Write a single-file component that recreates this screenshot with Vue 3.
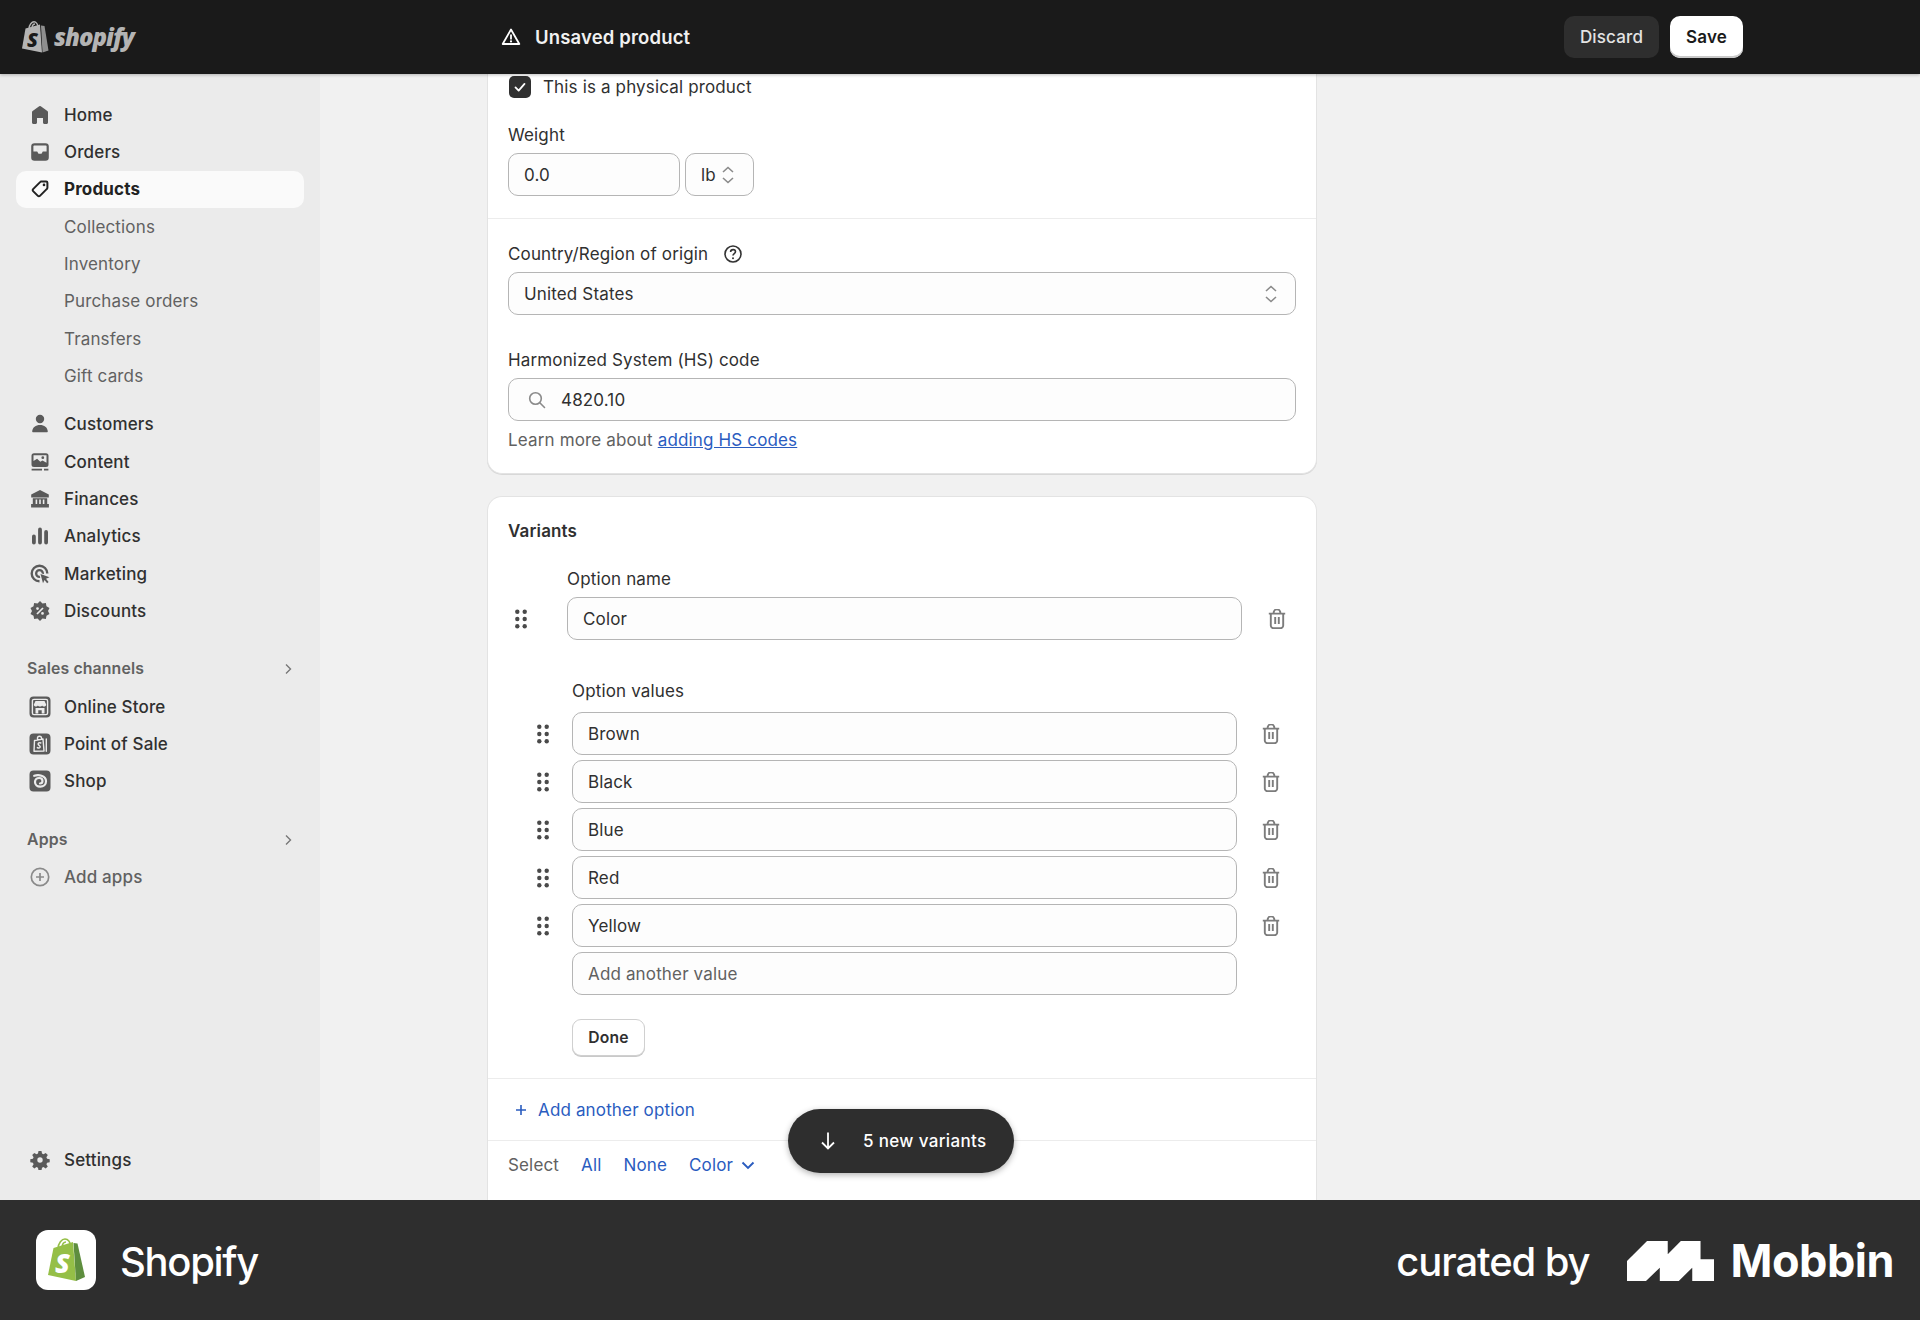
<script setup>
const D = '#5a5a5a'
const BG = '#ebebeb'
const badge = (() => {
  let p = ''
  const n = 10
  for (let i = 0; i < n * 2; i++) {
    const r = i % 2 ? 8 : 10
    const a = (Math.PI * i) / n
    p += (i ? 'L' : 'M') + (10 + r * Math.sin(a)).toFixed(2) + ' ' + (10 - r * Math.cos(a)).toFixed(2)
  }
  return p + 'Z'
})()

const icons = {
  home: [{ d: 'M18 7.26V17.5c0 .84-.67 1.500-1.500 1.500h-2c-.83 0-1.500-.66-1.500-1.500V13H7v4.48C7 18.32 6.33 19 5.500 19h-2c-.83 0-1.500-.68-1.500-1.52V7.26a1.500 1.500 0 0 1 .62-1.21l6.59-4.82a1.48 1.48 0 0 1 1.58 0l6.59 4.82A1.500 1.500 0 0 1 18 7.26z', c: D }],
  orders: [{ d: 'M4.500 1.200h11a3.300 3.300 0 0 1 3.300 3.300v11a3.300 3.300 0 0 1-3.300 3.300h-11a3.300 3.300 0 0 1-3.300-3.300v-11a3.300 3.300 0 0 1 3.300-3.300zM4.200 3.400a.8.8 0 0 0-.8.8v5.300h3.800l1.300 2.200h3l1.300-2.200h3.800V4.200a.8.8 0 0 0-.8-.8z', c: D }],
  products: [
    { s: 2, c: '#222', d: 'M11.200 2.600h5a1.200 1.200 0 0 1 1.200 1.200v5a1.600 1.600 0 0 1-.5 1.100l-7 7a1.400 1.400 0 0 1-2 0l-4.800-4.800a1.400 1.400 0 0 1 0-2l7-7a1.600 1.600 0 0 1 1.100-.5z' },
    { d: 'M14 4.600a1.300 1.300 0 1 1 0 2.600 1.300 1.300 0 0 1 0-2.600z', c: '#222' }
  ],
  customers: [{ d: 'M10 .8a4.200 4.200 0 1 1 0 8.400 4.200 4.200 0 0 1 0-8.400zM2.200 17.300c.3-4 3.500-6.300 7.800-6.300s7.500 2.300 7.800 6.300c0 .6-.4 1-1 1H3.200c-.6 0-1-.4-1-1z', c: D }],
  content: [
    { d: 'M4 1.200h12a2.500 2.500 0 0 1 2.500 2.500v8.800a2.500 2.500 0 0 1-2.500 2.500H4a2.500 2.500 0 0 1-2.500-2.500V3.700A2.500 2.500 0 0 1 4 1.200zM3.500 3.200v5.700l3.600-2.200 3.200 3 2.200-1.300 4 2.300V3.200z', c: D },
    { d: 'M12.800 4.300a1.400 1.400 0 1 1 0 2.800 1.400 1.400 0 0 1 0-2.800z', c: D },
    { d: 'M1.600 16.800h10.400v1.800H1.600zM14 16.800h4.400v1.800H14z', c: D }
  ],
  finances: [{ d: 'M10 1l8.800 4.500v3H1.200v-3zM2.800 9.300h14.400v5.700h1.700v3.500H1.100V15h1.700zM5.600 10.500v4.500h1.600v-4.500zM9.200 10.500v4.500h1.600v-4.500zM12.800 10.500v4.500h1.600v-4.500z', c: D }],
  analytics: [{ d: 'M2 10.400a1.900 1.900 0 0 1 3.800 0v6.200a1.900 1.900 0 0 1-3.800 0zM8.100 3.400a1.900 1.900 0 0 1 3.800 0v13.200a1.900 1.900 0 0 1-3.800 0zM14.200 5.900a1.900 1.900 0 0 1 3.800 0v10.700a1.900 1.900 0 0 1-3.800 0z', c: D }],
  marketing: [
    { d: 'M9.500 .5a9 9 0 0 1 9 9h-2.400a6.600 6.600 0 1 0-6.600 6.600v2.400a9 9 0 0 1 0-18zM9.500 5a4.500 4.500 0 1 1 0 9 4.500 4.500 0 0 1 0-9zM9.500 7.300a2.200 2.200 0 1 0 0 4.400 2.200 2.200 0 0 0 0-4.400z', c: D },
    { d: 'M9 8.500l11.500 4v3l-2.500 1 1 3.500h-3.500l-2-2.500-2 2z', c: BG },
    { d: 'M10.500 10l9 3.300-3.500 1.400 2.600 3.400-1.500 1.200-2.600-3.400-1.500 3.300z', c: D }
  ],
  discounts: [
    { d: badge, c: D },
    { d: 'M12.400 6.400l1.200 1.200-6 6-1.200-1.200z', c: BG },
    { d: 'M7.500 6.200a1.400 1.400 0 1 1 0 2.800 1.400 1.400 0 0 1 0-2.800zM12.500 11a1.400 1.400 0 1 1 0 2.800 1.400 1.400 0 0 1 0-2.800z', c: BG }
  ],
  store: [
    { d: 'M3.500 -.5h13a4 4 0 0 1 4 4v13a4 4 0 0 1-4 4h-13a4 4 0 0 1-4-4v-13a4 4 0 0 1 4-4z', c: D },
    { s: 1.400, c: BG, d: 'M4 2.400h12a1.600 1.600 0 0 1 1.600 1.600v12a1.600 1.600 0 0 1-1.600 1.600H4A1.600 1.600 0 0 1 2.400 16V4A1.600 1.600 0 0 1 4 2.400z' },
    { d: 'M5.500 4h9l1.700 3.500c0 1.500-1.200 2-2.100 2s-1.600-.5-2-1.100c-.4.6-1.100 1.100-2.100 1.100s-1.700-.5-2.100-1.100c-.4.6-1.100 1.100-2 1.100s-2.100-.5-2.100-2zM5.500 11h9v5.500h-2.800v-3.300H8.300v3.300H5.500z', c: BG }
  ],
  pos: [
    { d: 'M3.500 -.5h13a4 4 0 0 1 4 4v13a4 4 0 0 1-4 4h-13a4 4 0 0 1-4-4v-13a4 4 0 0 1 4-4z', c: D },
    { s: 1.400, c: BG, d: 'M4.500 6.500l8.500-1.500 1 12-10 .3zM7.500 6V4.200a2 2 0 0 1 4 0V5.300M16.300 5v12.300' },
    { s: 1.500, c: BG, d: 'M10.800 9c-1.500-.8-3 0-2.600 1.300.3 1 2.200 1.200 2 2.700-.2 1.200-1.800 1.300-2.800.6' }
  ],
  shop: [
    { d: 'M3.500 -.5h13a4 4 0 0 1 4 4v13a4 4 0 0 1-4 4h-13a4 4 0 0 1-4-4v-13a4 4 0 0 1 4-4z', c: D },
    { s: 2.200, c: BG, d: 'M4.200 4.800C8 3.500 16 4 16 10.200c0 3.400-2.500 5.500-5.800 5.500-2.800 0-5.200-1.900-5.200-4.700 0-2.300 1.800-4 4.200-4 2 0 3.300 1.400 3.300 3 0 1.500-1.200 2.500-2.500 2.500' }
  ],
  add: [
    { s: 1.700, c: '#8a8a8a', d: 'M10 1.300a8.700 8.700 0 1 1 0 17.400 8.700 8.700 0 0 1 0-17.400zM10 6v8M6 10h8' }
  ],
  settings: [
    { d: 'M8.500 1h3l.5 2.600 1.500.7 2.200-1.400 2.100 2.100-1.400 2.200.7 1.500 2.600.5v3l-2.600.5-.7 1.500 1.400 2.200-2.100 2.100-2.200-1.400-1.500.7-.5 2.600h-3l-.5-2.600-1.500-.7-2.200 1.400-2.100-2.100 1.400-2.200-.7-1.500-2.600-.5v-3l2.600-.5.7-1.500-1.400-2.200 2.100-2.100 2.200 1.400 1.500-.7zM10 7.300a2.700 2.700 0 1 0 0 5.400 2.700 2.700 0 0 0 0-5.400z', c: D }
  ]
}

const groupA = [
  { t: 'Home', i: 'home' },
  { t: 'Orders', i: 'orders' },
  { t: 'Products', i: 'products', active: true },
  { t: 'Collections', sub: true },
  { t: 'Inventory', sub: true },
  { t: 'Purchase orders', sub: true },
  { t: 'Transfers', sub: true },
  { t: 'Gift cards', sub: true }
]
const groupB = [
  { t: 'Customers', i: 'customers' },
  { t: 'Content', i: 'content' },
  { t: 'Finances', i: 'finances' },
  { t: 'Analytics', i: 'analytics' },
  { t: 'Marketing', i: 'marketing' },
  { t: 'Discounts', i: 'discounts' }
]
const groupC = [
  { t: 'Online Store', i: 'store' },
  { t: 'Point of Sale', i: 'pos' },
  { t: 'Shop', i: 'shop' }
]
const values = ['Brown', 'Black', 'Blue', 'Red', 'Yellow']
const groups = [groupA, groupB]
const drag = [[6.300, 2.800], [13.700, 2.800], [6.300, 10], [13.700, 10], [6.300, 17.200], [13.700, 17.200]]
const trashD = 'M1.800 4.600h16.400M6.600 4.600V3.800a3.400 3.400 0 0 1 6.800 0v.8M3.800 4.600v12a2.600 2.600 0 0 0 2.600 2.600h7.200a2.600 2.600 0 0 0 2.600-2.600v-12M8.200 8v7M11.800 8v7'
</script>

<template>
  <div class="page">
    <header class="top">
      <div class="brand">
        <svg class="bag" viewBox="0 0 28 32" width="28" height="32">
          <path d="M1 27.500L4.500 7.500 19 3.500l2 28z" fill="#b4b4b4" />
          <path d="M20 4.500l3.500 .5 4 24.500-6 2z" fill="#8f8f8f" />
          <path d="M8 8C8 3.500 11 .8 13 .8c2 0 4 2.500 4 5.500M11 7c.2-2.500 1.500-4 3-4" fill="none" stroke="#b4b4b4" stroke-width="1.400" />
        </svg>
        <span class="bag-s">S</span>
        <span class="wordmark">shopify</span>
      </div>
      <div class="unsaved">
        <svg viewBox="0 0 20 20" width="20" height="20"><path d="M10 2.500L18.300 17H1.700z" fill="none" stroke="#fff" stroke-width="1.800" stroke-linejoin="round" /><path d="M9.100 7.500h1.800v5H9.100zM10 13.300a1.100 1.100 0 1 1 0 2.200 1.100 1.100 0 0 1 0-2.200z" fill="#fff" /></svg>
        <span>Unsaved product</span>
      </div>
      <div class="actions">
        <div class="btn discard">Discard</div>
        <div class="btn save">Save</div>
      </div>
    </header>

    <div class="body">
      <aside class="side">
        <nav v-for="(g, gi) in groups" :key="gi" class="group">
          <div v-for="it in g" :key="it.t" class="nav" :class="{ active: it.active, sub: it.sub }">
            <svg v-if="it.i" class="nav-ic" viewBox="0 0 20 20" width="20" height="20">
              <path v-for="(p, k) in icons[it.i]" :key="k" :d="p.d" :fill="p.s ? 'none' : p.c" :stroke="p.s ? p.c : 'none'" :stroke-width="p.s || 0" fill-rule="evenodd" stroke-linecap="round" stroke-linejoin="round" />
            </svg>
            <span>{{ it.t }}</span>
          </div>
        </nav>

        <div class="heading">
          <span>Sales channels</span>
          <svg viewBox="0 0 10 14" width="10" height="14"><path d="M3 2.500L7.500 7 3 11.500" fill="none" stroke="#777" stroke-width="1.400" /></svg>
        </div>
        <div v-for="it in groupC" :key="it.t" class="nav">
          <svg class="nav-ic" viewBox="0 0 20 20" width="20" height="20" overflow="visible">
            <path v-for="(p, k) in icons[it.i]" :key="k" :d="p.d" :fill="p.s ? 'none' : p.c" :stroke="p.s ? p.c : 'none'" :stroke-width="p.s || 0" fill-rule="evenodd" stroke-linecap="round" stroke-linejoin="round" />
          </svg>
          <span>{{ it.t }}</span>
        </div>

        <div class="heading">
          <span>Apps</span>
          <svg viewBox="0 0 10 14" width="10" height="14"><path d="M3 2.500L7.500 7 3 11.500" fill="none" stroke="#777" stroke-width="1.400" /></svg>
        </div>
        <div class="nav muted">
          <svg class="nav-ic" viewBox="0 0 20 20" width="20" height="20">
            <path v-for="(p, k) in icons.add" :key="k" :d="p.d" fill="none" :stroke="p.c" :stroke-width="p.s" />
          </svg>
          <span>Add apps</span>
        </div>

        <div class="nav settings">
          <svg class="nav-ic" viewBox="0 0 20 20" width="20" height="20">
            <path :d="icons.settings[0].d" :fill="icons.settings[0].c" fill-rule="evenodd" />
          </svg>
          <span>Settings</span>
        </div>
      </aside>

      <main class="main">
        <section class="card first">
          <div class="sec sec-a">
            <div class="check-row">
              <span class="check"><svg viewBox="0 0 20 20" width="18" height="18"><path d="M5 10.500l3.500 3.500L15 6.500" fill="none" stroke="#fff" stroke-width="2" stroke-linecap="round" stroke-linejoin="round" /></svg></span>
              <span>This is a physical product</span>
            </div>
            <div class="label l-weight">Weight</div>
            <div class="weight-row">
              <div class="field w-val">0.0</div>
              <div class="field w-unit"><span>lb</span>
                <svg class="updown" viewBox="0 0 14 20" width="14" height="20"><path d="M2 7L7 2.500 12 7M2 13l5 4.500 5-4.500" fill="none" stroke="#8a8a8a" stroke-width="1.600" /></svg>
              </div>
            </div>
          </div>
          <div class="sec sec-b">
            <div class="label country">
              <span>Country/Region of origin</span>
              <svg viewBox="0 0 20 20" width="20" height="20"><circle cx="10" cy="10" r="8" fill="none" stroke="#333" stroke-width="1.600" /><path d="M7.600 8c0-1.500 1.100-2.400 2.500-2.400s2.400.9 2.400 2.200c0 1.900-2.500 1.800-2.500 3.700" fill="none" stroke="#333" stroke-width="1.600" /><circle cx="10" cy="14.300" r="1" fill="#333" /></svg>
            </div>
            <div class="field between"><span>United States</span>
              <svg class="updown" viewBox="0 0 14 20" width="14" height="20"><path d="M2 7L7 2.500 12 7M2 13l5 4.500 5-4.500" fill="none" stroke="#8a8a8a" stroke-width="1.600" /></svg>
            </div>
            <div class="label hs">Harmonized System (HS) code</div>
            <div class="field search">
              <svg viewBox="0 0 20 20" width="20" height="20"><circle cx="8.500" cy="8.500" r="5.800" fill="none" stroke="#8a8a8a" stroke-width="1.600" /><path d="M12.800 12.800L17.500 17.500" stroke="#8a8a8a" stroke-width="1.600" stroke-linecap="round" /></svg>
              <span>4820.10</span>
            </div>
            <div class="help">Learn more about <a class="ul">adding HS codes</a></div>
          </div>
        </section>

        <section class="card second">
          <div class="variants">
            <div class="title">Variants</div>
            <div class="label opt-label">Option name</div>
            <div class="opt-row">
              <svg class="drag d1" viewBox="0 0 20 20" width="20" height="20"><circle v-for="(c, k) in drag" :key="k" :cx="c[0]" :cy="c[1]" r="2.200" fill="#4a4a4a" /></svg>
              <div class="field grow">Color</div>
              <svg class="trash" viewBox="0 0 20 20" width="20" height="20"><path :d="trashD" fill="none" stroke="#7c7c7c" stroke-width="1.900" /></svg>
            </div>
            <div class="label val-label">Option values</div>
            <div class="values">
              <div v-for="v in values" :key="v" class="val-row">
                <svg class="drag d2" viewBox="0 0 20 20" width="20" height="20"><circle v-for="(c, k) in drag" :key="k" :cx="c[0]" :cy="c[1]" r="2.200" fill="#4a4a4a" /></svg>
                <div class="field grow">{{ v }}</div>
                <svg class="trash" viewBox="0 0 20 20" width="20" height="20"><path :d="trashD" fill="none" stroke="#7c7c7c" stroke-width="1.900" /></svg>
              </div>
              <div class="val-row">
                <div class="field grow placeholder">Add another value</div>
              </div>
            </div>
            <div class="done">Done</div>
          </div>
          <div class="add-row">
            <svg viewBox="0 0 12 12" width="12" height="12"><path d="M6 1v10M1 6h10" stroke="#2a5cbf" stroke-width="1.600" /></svg>
            <span>Add another option</span>
          </div>
          <div class="select-row">
            <span class="sel">Select</span>
            <span class="lnk">All</span>
            <span class="lnk">None</span>
            <span class="lnk color">Color
              <svg viewBox="0 0 14 12" width="14" height="12"><path d="M1.500 3.500L7 9l5.500-5.500" fill="none" stroke="#2a5cbf" stroke-width="1.900" /></svg>
            </span>
          </div>
        </section>

        <div class="toast">
          <svg viewBox="0 0 16 20" width="16" height="20"><path d="M8 1.500v16M2 11.500l6 6 6-6" fill="none" stroke="#fff" stroke-width="1.800" /></svg>
          <span>5 new variants</span>
        </div>
      </main>
    </div>

    <footer class="foot">
      <div class="foot-left">
        <div class="tile">
          <svg viewBox="0 0 38 44" width="38" height="44">
            <path d="M1 37L6.500 10 26 4l3 39z" fill="#95bf47" />
            <path d="M26.500 5l4 .5L38 39l-9 4z" fill="#5e8e3e" />
            <path d="M11 11C11 5 15 1 18 1c3 0 5.500 3 5.500 7M15 9.500c.3-3.500 2-5.500 4-5.500" fill="none" stroke="#95bf47" stroke-width="1.600" />
          </svg>
          <span class="tile-s">S</span>
        </div>
        <span class="foot-name">Shopify</span>
      </div>
      <div class="foot-right">
        <span class="curated">curated by</span>
        <svg class="mob" viewBox="0 0 252 120" width="87" height="40" preserveAspectRatio="none"><path d="M0 60L58 0h60v40L156 0h57v55h39v65h-63V80l-39 40H95V80L55 120H0z" fill="#fff" /></svg>
        <span class="mobbin">Mobbin</span>
      </div>
    </footer>
  </div>
</template>

<style>
html, body { margin: 0; padding: 0; }
</style>

<style scoped>
.page {
  width: 1920px;
  height: 1320px;
  display: flex;
  flex-direction: column;
  overflow: hidden;
  font-family: Inter, "Liberation Sans", sans-serif;
  font-size: 17px;
  letter-spacing: .15px;
  line-height: 24px;
  color: #303030;
  background: #f1f1f1;
}
.top {
  height: 74px;
  flex: none;
  background: #1a1a1a;
  display: flex;
  align-items: center;
  position: relative;
  z-index: 3;
  box-shadow: 0 1px 3px rgba(0, 0, 0, .25);
}
.brand {
  width: 480px;
  padding-left: 21px;
  box-sizing: border-box;
  display: flex;
  align-items: center;
  position: relative;
  color: #b4b4b4;
}
.bag { margin-top: -1px; }
.bag-s {
  position: absolute;
  left: 27px;
  top: 6px;
  font: italic 800 20px/24px "Open Sans", sans-serif;
  color: #1a1a1a;
}
.wordmark {
  margin-left: 5px;
  font: italic 800 24px/30px "Open Sans", sans-serif;
  letter-spacing: -1px;
}
.unsaved {
  margin-left: 21px;
  display: flex;
  align-items: center;
  gap: 14px;
  color: #f1f1f1;
  font-size: 18.500px;
  font-weight: 600;
}
.actions {
  margin-left: auto;
  margin-right: 177px;
  display: flex;
  gap: 11px;
}
.btn {
  height: 42px;
  display: flex;
  align-items: center;
  justify-content: center;
  border-radius: 10px;
  box-sizing: border-box;
}
.discard { width: 95px; background: #2e2e2e; color: #e3e3e3; font-weight: 500; }
.save { width: 73px; background: #fff; color: #1a1a1a; font-weight: 600; box-shadow: inset 0 -2px 0 #c9c9c9; }

.body { flex: 1; display: flex; min-height: 0; }
.side {
  width: 320px;
  flex: none;
  background: #ebebeb;
  padding: 22px 16px 21px;
  box-sizing: border-box;
  display: flex;
  flex-direction: column;
}
.group + .group { margin-top: 11px; }
.nav {
  height: 37.330px;
  display: flex;
  align-items: center;
  border-radius: 10px;
  padding-left: 14px;
  gap: 14px;
  flex: none;
  color: #303030;
  font-weight: 500;
}
.nav-ic { flex: none; }
.nav.active { background: #fafafa; font-weight: 650; color: #222; }
.nav.sub { padding-left: 48px; color: #616161; font-weight: 400; }
.nav.muted { color: #616161; }
.nav.settings { margin-top: auto; }
.heading {
  height: 37.330px;
  margin-top: 21px;
  padding: 0 11px 0 11px;
  display: flex;
  align-items: center;
  justify-content: space-between;
  font-size: 15.800px;
  font-weight: 600;
  color: #616161;
  flex: none;
}
.main {
  flex: 1;
  position: relative;
  overflow: hidden;
  padding-left: 167px;
  display: flex;
  flex-direction: column;
  align-items: flex-start;
}
.card {
  width: 830px;
  box-sizing: border-box;
  background: #fff;
  border: 1px solid #e3e3e3;
}
.first {
  flex: none;
  border-top: 0;
  border-radius: 0 0 15px 15px;
  box-shadow: 0 1px 0 #d8d8d8;
}
.second {
  flex: 1;
  margin-top: 22px;
  border-radius: 15px 15px 0 0;
  border-bottom: 0;
}
.sec { padding: 0 20px; }
.sec-a { padding-top: 2px; padding-bottom: 22px; border-bottom: 1px solid #ececec; }
.sec-b { padding-top: 22px; padding-bottom: 21px; }
.check-row { display: flex; align-items: center; gap: 12px; height: 22px; }
.check {
  width: 22px; height: 22px; margin-left: 1px;
  background: #303030; border-radius: 5px;
  display: flex; align-items: center; justify-content: center;
}
.label { height: 24px; padding-top: 1px; margin-bottom: 6px; }
.l-weight { margin-top: 24px; }
.field {
  height: 43px;
  box-sizing: border-box;
  border: 1px solid #b5b5b5;
  border-radius: 10px;
  background: #fdfdfd;
  padding: 0 15px;
  display: flex;
  align-items: center;
}
.weight-row { display: flex; gap: 5px; }
.w-val { width: 172px; }
.w-unit { width: 69px; gap: 5px; }
.updown { flex: none; }
.country { display: flex; align-items: center; gap: 15px; }
.between { justify-content: space-between; padding-right: 17px; }
.hs { margin-top: 32px; }
.search { gap: 14px; padding-left: 18px; }
.help { margin-top: 7px; color: #616161; }
.ul { color: #2a5cbf; text-decoration: underline; }
.variants { padding: 21px 20px 22px; border-bottom: 1px solid #ececec; }
.title { font-weight: 600; height: 24px; padding-top: 1px; }
.opt-label { margin-top: 23px; padding-left: 59px; }
.opt-row { display: flex; align-items: center; }
.d1 { margin-left: 3px; margin-right: 36px; flex: none; }
.trash { flex: none; margin-left: 24px; }
.opt-row .trash { margin-left: 25px; }
.grow { flex: none; width: 675px; }
.val-label { margin-top: 39px; margin-bottom: 9px; padding-top: 0; padding-left: 64px; }
.values { display: flex; flex-direction: column; gap: 5px; padding-left: 64px; }
.val-row { display: flex; align-items: center; position: relative; }
.val-row .grow { width: 665px; }
.d2 { position: absolute; left: -39px; top: 12px; }
.placeholder { color: #616161; }
.done {
  margin: 24px 0 0 64px;
  width: 73px; height: 37px;
  box-sizing: border-box;
  display: flex; align-items: center; justify-content: center;
  border: 1px solid #d0d0d0;
  border-radius: 9px;
  font-size: 15.700px;
  font-weight: 600;
  background: #fff;
  box-shadow: 0 1px 0 #c9c9c9;
}
.add-row {
  height: 62px;
  padding-left: 27px;
  display: flex;
  align-items: center;
  gap: 11px;
  color: #2a5cbf;
  border-bottom: 1px solid #ececec;
  box-sizing: border-box;
}
.select-row {
  height: 48px;
  padding-left: 20px;
  display: flex;
  align-items: center;
  gap: 22px;
  color: #2a5cbf;
}
.sel { color: #616161; }
.color { display: flex; align-items: center; gap: 8px; }
.toast {
  position: absolute;
  left: 468px;
  top: 1035px;
  width: 226px;
  height: 64px;
  box-sizing: border-box;
  padding-left: 32px;
  border-radius: 32px;
  background: #2e2e2e;
  color: #fff;
  display: flex;
  align-items: center;
  gap: 27px;
  font-weight: 500;
  letter-spacing: .35px;
  box-shadow: 0 2px 6px rgba(0, 0, 0, .3);
}
.foot {
  height: 120px;
  flex: none;
  background: #2e2e2e;
  position: relative;
  z-index: 4;
  display: flex;
  align-items: center;
  justify-content: space-between;
  color: #fff;
  padding: 0 26px 0 36px;
}
.foot-left, .foot-right { display: flex; align-items: center; }
.tile {
  width: 60px; height: 60px;
  background: #fff;
  border-radius: 12px;
  display: flex; align-items: center; justify-content: center;
  position: relative;
}
.tile-s {
  position: absolute;
  left: 19px;
  top: 18px;
  font: italic 800 27px/30px "Open Sans", sans-serif;
  color: #fff;
}
.foot-name { margin-left: 24px; margin-top: 3px; font-size: 40px; line-height: 50px; font-weight: 500; letter-spacing: -1.300px; }
.curated { margin-top: 4px; font-size: 40px; line-height: 50px; font-weight: 500; letter-spacing: -1.100px; }
.mob { margin-left: 37px; margin-top: 2px; }
.mobbin { margin-left: 17px; margin-top: 1px; font-size: 45px; line-height: 50px; font-weight: 700; letter-spacing: -.5px; }
</style>
